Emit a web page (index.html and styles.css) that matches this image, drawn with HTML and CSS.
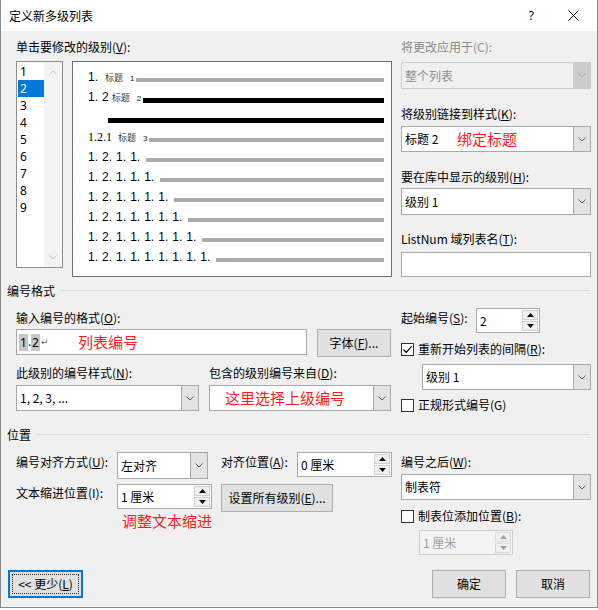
FILE: index.html
```html
<!DOCTYPE html>
<html lang="zh-CN">
<head>
<meta charset="utf-8">
<title>定义新多级列表</title>
<link rel="stylesheet" href="styles.css">
</head>
<body>
<div class="dlg">
  <div class="titlebar">
    <span class="title">定义新多级列表</span>
    <span class="help">?</span>
    <svg class="close" width="11" height="11" viewBox="0 0 11 11"><path d="M0.5 0.5 L10.5 10.5 M10.5 0.5 L0.5 10.5" stroke="#000" stroke-width="1" fill="none"/></svg>
  </div>
  <div class="body">
    <div class="top">
      <div class="levels">
        <div class="lbl">单击要修改的级别(<u>V</u>):</div>
        <div class="levels-row">
          <div class="listbox">
            <div class="items">
              <div class="item">1</div>
              <div class="item sel">2</div>
              <div class="item">3</div>
              <div class="item">4</div>
              <div class="item">5</div>
              <div class="item">6</div>
              <div class="item">7</div>
              <div class="item">8</div>
              <div class="item">9</div>
            </div>
            <div class="vscroll">
              <svg width="8" height="5" viewBox="0 0 8 5"><polyline points="0.5,4.5 4,1 7.5,4.5" fill="none" stroke="#c2c2c2" stroke-width="1"/></svg>
              <svg width="8" height="5" viewBox="0 0 8 5"><polyline points="0.5,0.5 4,4 7.5,0.5" fill="none" stroke="#c2c2c2" stroke-width="1"/></svg>
            </div>
          </div>
          <div class="preview">
            <div class="prow"><span class="plabel"><span class="num">1.</span><span class="h h1">标题</span><span class="hn">1</span></span><span class="bar" style="width:248px"></span></div>
            <div class="prow"><span class="plabel"><span class="num ws">1. 2</span><span class="h h2">标题</span><span class="hn">2</span></span><span class="bar dark" style="width:241px"></span></div>
            <div class="prow"><span class="plabel"></span><span class="bar dark" style="width:276px"></span></div>
            <div class="prow"><span class="plabel"><span class="num serif">1.2.1</span><span class="h h3">标题</span><span class="hn">3</span></span><span class="bar" style="width:235px"></span></div>
            <div class="prow"><span class="plabel"><span class="num ws">1. 2. 1. 1.</span></span><span class="bar" style="width:238px"></span></div>
            <div class="prow"><span class="plabel"><span class="num ws">1. 2. 1. 1. 1.</span></span><span class="bar" style="width:224px"></span></div>
            <div class="prow"><span class="plabel"><span class="num ws">1. 2. 1. 1. 1. 1.</span></span><span class="bar" style="width:210px"></span></div>
            <div class="prow"><span class="plabel"><span class="num ws">1. 2. 1. 1. 1. 1. 1.</span></span><span class="bar" style="width:196px"></span></div>
            <div class="prow"><span class="plabel"><span class="num ws">1. 2. 1. 1. 1. 1. 1. 1.</span></span><span class="bar" style="width:182px"></span></div>
            <div class="prow"><span class="plabel"><span class="num ws">1. 2. 1. 1. 1. 1. 1. 1. 1.</span></span><span class="bar" style="width:168px"></span></div>
          </div>
        </div>
      </div>
      <div class="side">
        <div class="lbl dis">将更改应用于(C):</div>
        <div class="combo dis h27 mt7">
          <div class="val">整个列表</div>
          <div class="dd"><svg width="8" height="5" viewBox="0 0 8 5"><polyline points="0.5,0.5 4,4 7.5,0.5" fill="none" stroke="#a8a8a8" stroke-width="1"/></svg></div>
        </div>
        <div class="lbl mt17">将级别链接到样式(<u>K</u>):</div>
        <div class="combo mt4">
          <div class="val"><span class="lead-style">标题 2</span><span class="red">绑定标题</span></div>
          <div class="dd"><svg width="8" height="5" viewBox="0 0 8 5"><polyline points="0.5,0.5 4,4 7.5,0.5" fill="none" stroke="#5a5a5a" stroke-width="1"/></svg></div>
        </div>
        <div class="lbl mt17">要在库中显示的级别(<u>H</u>):</div>
        <div class="combo h27 mt3">
          <div class="val">级别 1</div>
          <div class="dd"><svg width="8" height="5" viewBox="0 0 8 5"><polyline points="0.5,0.5 4,4 7.5,0.5" fill="none" stroke="#5a5a5a" stroke-width="1"/></svg></div>
        </div>
        <div class="lbl mt16">ListNum 域列表名(<u>T</u>):</div>
        <div class="tbox mt5"></div>
      </div>
    </div>

    <div class="ghead ghead1"><span>编号格式</span></div>
    <div class="fmt">
      <div class="fmt-left">
        <div class="lbl mt12">输入编号的格式(<u>O</u>):</div>
        <div class="row mt3">
          <div class="tinput"><span class="fmtval"><span class="fld">1</span>.<span class="fld">2</span><span class="ret">↵</span></span><span class="red">列表编号</span></div>
          <div class="btn font-btn">字体(<u>F</u>)...</div>
        </div>
        <div class="row mt8">
          <div class="lbl w193">此级别的编号样式(<u>N</u>):</div>
          <div class="lbl">包含的级别编号来自(<u>D</u>):</div>
        </div>
        <div class="row gap10 mt4">
          <div class="combo w183">
            <div class="val">1, 2, 3, ...</div>
            <div class="dd"><svg width="8" height="5" viewBox="0 0 8 5"><polyline points="0.5,0.5 4,4 7.5,0.5" fill="none" stroke="#5a5a5a" stroke-width="1"/></svg></div>
          </div>
          <div class="combo w182">
            <div class="val"><span class="red ml12">这里选择上级编号</span></div>
            <div class="dd"><svg width="8" height="5" viewBox="0 0 8 5"><polyline points="0.5,0.5 4,4 7.5,0.5" fill="none" stroke="#5a5a5a" stroke-width="1"/></svg></div>
          </div>
        </div>
      </div>
      <div class="fmt-right">
        <div class="row mt10">
          <div class="lbl w75 mt2">起始编号(<u>S</u>):</div>
          <div class="spin w64">
            <div class="val">2</div>
            <div class="arrows">
              <div class="sb"><svg width="7" height="4" viewBox="0 0 7 4"><polygon points="0,4 3.5,0 7,4" fill="#000"/></svg></div>
              <div class="sb"><svg width="7" height="4" viewBox="0 0 7 4"><polygon points="0,0 3.5,4 7,0" fill="#000"/></svg></div>
            </div>
          </div>
        </div>
        <div class="chk mt8">
          <span class="cb"><svg width="11" height="11" viewBox="0 0 11 11"><polyline points="1.5,5.5 4.2,8.3 9.6,2.4" fill="none" stroke="#000" stroke-width="1.2"/></svg></span>
          <span>重新开始列表的间隔(<u>R</u>):</span>
        </div>
        <div class="combo ml21 mt7">
          <div class="val">级别 1</div>
          <div class="dd"><svg width="8" height="5" viewBox="0 0 8 5"><polyline points="0.5,0.5 4,4 7.5,0.5" fill="none" stroke="#5a5a5a" stroke-width="1"/></svg></div>
        </div>
        <div class="chk mt7">
          <span class="cb"></span>
          <span>正规形式编号(G)</span>
        </div>
      </div>
    </div>

    <div class="ghead ghead2"><span>位置</span></div>
    <div class="pos">
      <div class="pos-left">
        <div class="row mt10">
          <div class="lbl w101 mt2">编号对齐方式(<u>U</u>):</div>
          <div class="combo w91 h27">
            <div class="val">左对齐</div>
            <div class="dd"><svg width="8" height="5" viewBox="0 0 8 5"><polyline points="0.5,0.5 4,4 7.5,0.5" fill="none" stroke="#5a5a5a" stroke-width="1"/></svg></div>
          </div>
          <div class="lbl w76 ml13 mt2">对齐位置(<u>A</u>):</div>
          <div class="spin w95">
            <div class="val">0 厘米</div>
            <div class="arrows">
              <div class="sb"><svg width="7" height="4" viewBox="0 0 7 4"><polygon points="0,4 3.5,0 7,4" fill="#000"/></svg></div>
              <div class="sb"><svg width="7" height="4" viewBox="0 0 7 4"><polygon points="0,0 3.5,4 7,0" fill="#000"/></svg></div>
            </div>
          </div>
        </div>
        <div class="row mt5">
          <div class="lbl w101 mt1">文本缩进位置(I):</div>
          <div class="spin w95">
            <div class="val">1 厘米</div>
            <div class="arrows">
              <div class="sb"><svg width="7" height="4" viewBox="0 0 7 4"><polygon points="0,4 3.5,0 7,4" fill="#000"/></svg></div>
              <div class="sb"><svg width="7" height="4" viewBox="0 0 7 4"><polygon points="0,0 3.5,4 7,0" fill="#000"/></svg></div>
            </div>
          </div>
          <div class="btn w112 ml9">设置所有级别(<u>E</u>)...</div>
        </div>
        <div class="red note">调整文本缩进</div>
      </div>
      <div class="pos-right">
        <div class="lbl mt12">编号之后(<u>W</u>):</div>
        <div class="combo mt4">
          <div class="val">制表符</div>
          <div class="dd"><svg width="8" height="5" viewBox="0 0 8 5"><polyline points="0.5,0.5 4,4 7.5,0.5" fill="none" stroke="#5a5a5a" stroke-width="1"/></svg></div>
        </div>
        <div class="chk mt8">
          <span class="cb"></span>
          <span>制表位添加位置(<u>B</u>):</span>
        </div>
        <div class="spin dis w94 ml18 mt6">
          <div class="val">1 厘米</div>
          <div class="arrows">
            <div class="sb"><svg width="7" height="4" viewBox="0 0 7 4"><polygon points="0,4 3.5,0 7,4" fill="#a0a0a0"/></svg></div>
            <div class="sb"><svg width="7" height="4" viewBox="0 0 7 4"><polygon points="0,0 3.5,4 7,0" fill="#a0a0a0"/></svg></div>
          </div>
        </div>
      </div>
    </div>

    <div class="footer">
      <div class="btn more"><span>&lt;&lt; 更少(<u>L</u>)</span></div>
      <div class="footer-right">
        <div class="btn w74">确定</div>
        <div class="btn w74">取消</div>
      </div>
    </div>
  </div>
</div>
</body>
</html>
```

FILE: styles.css
```css
* { box-sizing: border-box; }
html, body { margin: 0; padding: 0; background: #fff; }
body {
  font-family: "Noto Sans CJK SC", "Noto Sans", sans-serif;
  font-size: 12px;
  line-height: 16px;
  color: #000;
}
u { text-decoration: underline; text-underline-offset: 1px; text-decoration-thickness: 1px; }

.dlg {
  width: 598px;
  height: 608px;
  border: 1px solid #8a8a8a;
  border-top: none;
  background: #f0f0f0;
  display: flex;
  flex-direction: column;
}

.titlebar {
  flex: none;
  height: 31px;
  background: #fff;
  display: flex;
  align-items: center;
}
.title { margin-left: 8px; }
.help { margin-left: auto; font-family: "Noto Sans", sans-serif; font-size: 12px; }
.close { margin-left: 34px; margin-right: 18px; }

.body {
  flex: 1;
  display: flex;
  flex-direction: column;
  padding: 0 6px 9px 6px;
}

/* generic helpers */
.row { display: flex; align-items: flex-start; }
.gap10 { gap: 10px; }
.mt1 { margin-top: 1px; } .mt2 { margin-top: 2px; } .mt3 { margin-top: 3px; }
.mt4 { margin-top: 4px; } .mt5 { margin-top: 5px; } .mt6 { margin-top: 6px; }
.mt7 { margin-top: 7px; } .mt8 { margin-top: 8px; } .mt10 { margin-top: 10px; }
.mt12 { margin-top: 12px; } .mt16 { margin-top: 16px; } .mt17 { margin-top: 17px; }
.ml9 { margin-left: 9px; } .ml12 { margin-left: 12px; } .ml13 { margin-left: 13px; }
.ml18 { margin-left: 18px; } .ml21 { margin-left: 21px; }
.w64 { width: 64px; flex: none; } .w74 { width: 74px; flex: none; } .w75 { width: 75px; flex: none; }
.w76 { width: 76px; flex: none; } .w91 { width: 91px; flex: none; } .w94 { width: 94px; flex: none; }
.w95 { width: 95px; flex: none; } .w101 { width: 101px; flex: none; } .w112 { width: 112px; flex: none; }
.w182 { width: 182px; flex: none; } .w183 { width: 183px; flex: none; } .w193 { width: 193px; flex: none; }

.lbl { line-height: 16px; white-space: nowrap; }
.lbl.dis { color: #8a8a8a; }

.red {
  color: #ff1c1c;
  font-size: 15px;
  line-height: 18px;
}

/* ---------- top ---------- */
.top { display: flex; padding: 8px 0 0 9px; }
.levels { width: 376px; flex: none; }
.levels-row { display: flex; align-items: flex-start; gap: 9px; margin-top: 6px; }

.listbox {
  width: 47px;
  height: 207px;
  border: 1px solid #8e8e8e;
  background: #fff;
  display: flex;
  flex: none;
}
.items { width: 26px; margin: 1px 0 0 1px; }
.item {
  height: 17px;
  line-height: 17px;
  padding-left: 2px;
  font-family: "Noto Sans", sans-serif;
  font-size: 12px;
}
.item.sel { background: #0078d7; color: #fff; }
.vscroll {
  margin-left: auto;
  width: 18px;
  background: #f3f3f3;
  display: flex;
  flex-direction: column;
  justify-content: space-between;
  align-items: center;
  padding: 8px 0 7px 0;
}

.preview {
  width: 320px;
  height: 216px;
  flex: none;
  border: 1px solid #6f6f6f;
  background: #fff;
  padding: 8px 7px 6px 15px;
}
.prow {
  height: 20px;
  display: flex;
  justify-content: space-between;
  align-items: flex-start;
}
.plabel {
  font-family: "Liberation Sans", Arial, sans-serif;
  font-size: 12px;
  line-height: 14px;
  white-space: pre;
}
.num.ws { word-spacing: 0.7px; }
.num.serif { font-family: "Liberation Serif", serif; font-size: 12px; }
.h {
  font-family: "Noto Sans CJK SC", sans-serif;
  font-size: 9px;
  color: #3c3c3c;
}
.h1 { margin-left: 7px; }
.h2 { margin-left: 3px; }
.h3 { margin-left: 6px; }
.hn { font-size: 8px; margin-left: 7px; color: #222; }
.bar { height: 4px; margin-top: 8px; background: #ababab; flex: none; }
.bar.dark { height: 5px; background: #000; }

.side { width: 190px; flex: none; margin-left: 9px; }

/* ---------- controls ---------- */
.combo {
  display: flex;
  height: 26px;
  border: 1px solid #a9a9a9;
  background: #fff;
}
.combo.h27 { height: 27px; }
.combo .val {
  flex: 1;
  display: flex;
  align-items: center;
  padding-left: 3px;
  white-space: nowrap;
  overflow: hidden;
}
.combo .dd {
  width: 17px;
  flex: none;
  border-left: 1px solid #a9a9a9;
  background: #e3e3e3;
  display: flex;
  align-items: center;
  justify-content: center;
}
.combo.dis { background: #f0f0f0; border-color: #cccccc; color: #8f8f8f; }
.combo.dis .dd { background: #cccccc; border-left-color: #cccccc; }
.lead-style { width: 52px; flex: none; }

.tbox {
  height: 25px;
  border: 1px solid #a9a9a9;
  background: #fff;
}

.tinput {
  width: 291px;
  height: 26px;
  flex: none;
  border: 1px solid #a9a9a9;
  background: #fff;
  display: flex;
  align-items: center;
  padding-left: 2px;
}
.fmtval {
  width: 59px;
  flex: none;
  font-family: "Noto Sans", sans-serif;
  display: flex;
  align-items: center;
  height: 17px;
}
.fld { background: #c6c6c6; padding: 0 1px; height: 17px; line-height: 17px; }
.ret { font-family: "DejaVu Sans", sans-serif; font-size: 9px; color: #666; margin-left: 1px; }

.btn {
  height: 28px;
  border: 1px solid #adadad;
  background: #e1e1e1;
  display: flex;
  align-items: center;
  justify-content: center;
  white-space: nowrap;
}
.font-btn { width: 74px; flex: none; margin-left: 10px; }

.spin {
  display: flex;
  height: 25px;
  border: 1px solid #a9a9a9;
  background: #fff;
}
.spin .val {
  flex: 1;
  display: flex;
  align-items: center;
  padding-left: 3px;
  white-space: nowrap;
}
.spin .arrows {
  width: 17px;
  flex: none;
  display: flex;
  flex-direction: column;
  padding: 1px 1px 1px 0;
  gap: 1px;
}
.spin .sb {
  flex: 1;
  background: #f0f0f0;
  border: 1px solid #d0d0d0;
  display: flex;
  align-items: center;
  justify-content: center;
}
.spin.dis { background: #f4f4f4; border-color: #cccccc; color: #a0a0a0; }
.spin.dis .sb { background: #f0f0f0; border-color: #dadada; }

.chk { display: flex; align-items: center; height: 16px; line-height: 16px; white-space: nowrap; }
.cb {
  width: 13px;
  height: 13px;
  flex: none;
  border: 1px solid #333;
  background: #fff;
  margin-right: 4px;
  display: flex;
  align-items: center;
  justify-content: center;
}

/* ---------- groups ---------- */
.ghead {
  display: flex;
  align-items: center;
  height: 14px;
  line-height: 14px;
  margin-right: 1px;
}
.ghead::after {
  content: "";
  flex: 1;
  height: 1px;
  background: #dcdcdc;
  margin-left: 5px;
  margin-bottom: 2px;
}
.ghead1 { margin-top: 7px; }
.ghead2 { margin-top: 15px; }

.fmt { display: flex; padding-left: 9px; }
.fmt-left { width: 375px; flex: none; }
.fmt-right { width: 190px; flex: none; margin-left: 10px; }

.pos { display: flex; padding-left: 9px; }
.pos-left { width: 375px; flex: none; }
.pos-right { width: 190px; flex: none; margin-left: 10px; }
.note { margin-left: 106px; }

/* ---------- footer ---------- */
.footer {
  margin-top: auto;
  display: flex;
  align-items: flex-end;
  justify-content: space-between;
  padding: 0 1px;
}
.footer-right { display: flex; gap: 10px; }
.btn.more {
  width: 75px;
  border: 2px solid #0078d7;
  position: relative;
}
.btn.more::after {
  content: "";
  position: absolute;
  left: 2px; top: 2px; right: 2px; bottom: 2px;
  border: 1px dotted #222;
}
```
